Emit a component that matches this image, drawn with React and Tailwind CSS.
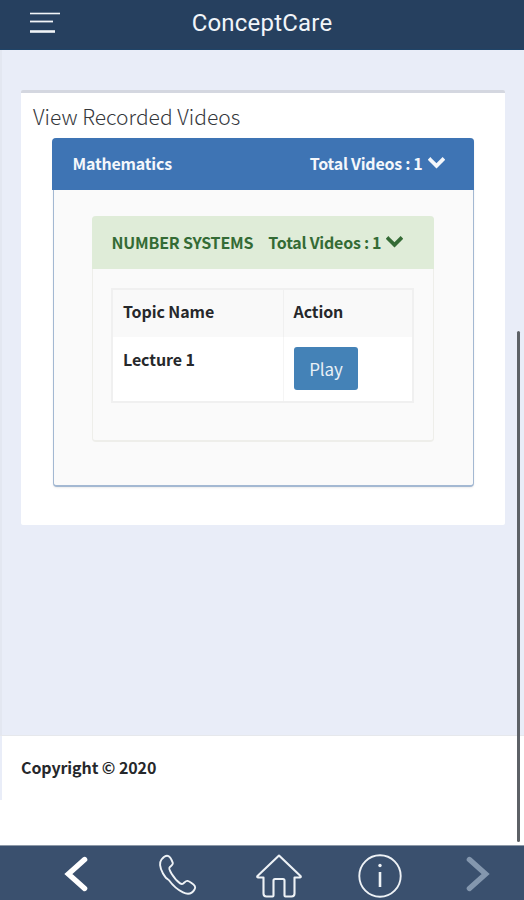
const sans = { fontFamily: '"Noto Sans CJK SC", "Noto Sans", sans-serif' };

function Chevron({ className }) {
  return (
    <svg viewBox="0 0 18 12" className={className} fill="none" stroke="currentColor" strokeWidth="3.900" strokeLinecap="square" strokeLinejoin="miter">
      <path d="M2.500 2.500 9 9l6.500-6.500" />
    </svg>
  );
}

export default function App() {
  return (
    <div className="relative flex h-[900px] w-[524px] flex-col overflow-hidden bg-white" style={sans}>
      <header className="relative flex h-[50px] shrink-0 items-center justify-center border-b border-[#1f4468] bg-[#26405f] pb-[4px]">
        <svg viewBox="0 0 32 24" className="absolute left-[29px] top-[11px] h-[24px] w-[32px]" fill="none" stroke="#f2f5f8" strokeLinecap="butt">
          <path d="M1 2.500h30" strokeWidth="1.600" />
          <path d="M1 10.500h23" strokeWidth="1.800" />
          <path d="M1 20.500h25" strokeWidth="2.600" />
        </svg>
        <span className="font-['Roboto',sans-serif] text-[24px] leading-none tracking-[0.2px] text-[#f1f5f9]">ConceptCare</span>
      </header>

      <main className="flex-1 border-l-2 border-[#e3e7f1] bg-[#e9edf8] pl-[19px] pr-[19px] pt-[40px]">
        <section className="h-[435px] rounded-[2px] border-t-[3px] border-[#d4d7e0] bg-white pl-[12px] pr-[32px]">
          <h1 className="pt-[9px] text-[21px] font-light leading-[28px] text-[#35383c]">View Recorded Videos</h1>
          <div className="ml-[19.500px] mt-[8px] h-[349px] w-[421px] rounded-[4px] border-x-[1.500px] border-b-2 border-[#a3b8d2] bg-[#fafafa] shadow-[0_1px_2px_rgba(0,0,0,0.08)]">
            <div className="-mx-[1.500px] flex h-[52px] items-center justify-between rounded-t-[4px] bg-[#3e74b4] pb-[2px] pl-[20.500px] pr-[29.500px] text-[16px] font-bold tracking-[-0.2px] text-[#f4f7fb]">
              <span>Mathematics</span>
              <span className="flex items-center gap-[5px] [word-spacing:-0.3px]">
                Total Videos : 1
                <Chevron className="h-[12px] w-[17px]" />
              </span>
            </div>
            <div className="ml-[38px] mt-[26px] h-[226px] w-[342px] rounded-[4px] border-x border-b-2 border-[#eeeeea] bg-[#fafafa]">
              <div className="-mx-px flex h-[53px] items-center rounded-t-[4px] bg-[#dfecd8] pb-[2px] pl-[20px] text-[16px] font-bold tracking-[-0.2px] text-[#346b35]">
                <span>NUMBER SYSTEMS</span>
                <span className="ml-[15px] flex items-center gap-[5px] [word-spacing:-0.2px]">
                  Total Videos : 1
                  <Chevron className="h-[12px] w-[17px]" />
                </span>
              </div>
              <table className="ml-[18.500px] mt-[19px] w-[303px] table-fixed border-collapse border-2 border-[#f0f0f0] text-[16px] font-bold tracking-[-0.1px] text-[#26282b]">
                <tbody>
                  <tr className="h-[48px] bg-[#f9f9f9]">
                    <td className="w-[171px] border-r border-[#f0f0f0] pb-[5px] pl-[10px]">Topic Name</td>
                    <td className="pb-[5px] pl-[10px]">Action</td>
                  </tr>
                  <tr className="h-[65px] bg-white">
                    <td className="border-r border-[#f5f5f5] pl-[10px] pt-[10px] align-top leading-[24px]">Lecture 1</td>
                    <td className="pl-[10.500px] align-top pt-[10px]">
                      <button className="flex h-[43px] w-[64px] items-center justify-center rounded-[3px] bg-[#4482b7] text-[17px] font-normal text-[#e8f0f6]">Play</button>
                    </td>
                  </tr>
                </tbody>
              </table>
            </div>
          </div>
        </section>
      </main>

      <footer className="h-[110px] shrink-0 border-t border-[#e6e8ec] bg-white pl-[21px] pt-[19px] text-[16px] font-bold leading-[24px] tracking-[-0.1px] text-[#26282b]">
        Copyright © 2020
      </footer>
      <div className="absolute left-0 top-[736px] h-[64px] w-[2px] bg-[#e9edf8]" />

      <nav className="relative flex h-[55px] shrink-0 items-center border-t border-[#8d99a8] bg-[#3a506e]">
        <svg viewBox="0 0 32 40" className="absolute left-[62px] top-[10px] h-[36px] w-[29px]" fill="none" stroke="#ffffff" strokeWidth="6" strokeLinecap="round" strokeLinejoin="miter">
          <path d="M25 4 7 20l18 16" />
        </svg>
        <svg viewBox="0 0 40 44" className="absolute left-[158px] top-[7px] h-[44px] w-[40px]" fill="none" stroke="#eef2f6" strokeWidth="1.900" strokeLinejoin="round">
          <path d="M3.500 6.500c2-2.400 5-4.400 7-3.400 1.400.7 3.700 5.100 4.300 6.800.5 1.500-1.800 3.200-3.200 4.500-.8.8.2 3.400 2 6.300 3 4.800 5.600 7.700 8.500 9.700 1.200.8 2.200.9 3.200.1 1.500-1.200 2.700-2.900 4.200-2.600 1.900.4 6.300 3.500 7.400 5.300 1 1.700-1 4.900-3.200 6.400-2.500 1.700-5.600 1.300-8.700-.2-4.900-2.400-10-6.600-14.200-12.400C6.500 25 2.500 16.700 2.100 12.200c-.2-2.300.1-4 1.400-5.700Z" />
        </svg>
        <svg viewBox="0 0 46 44" className="absolute left-[256px] top-[8px] h-[44px] w-[46px]" fill="none" stroke="#eef2f6" strokeWidth="2.100" strokeLinejoin="round" strokeLinecap="round">
          <path d="M23 1.500 44.500 22c.6.7.2 1.500-.7 1.500H38.500v16c0 2-1 3-3 3h-6c-.6 0-1-.4-1-1V26.500c0-1-.5-1.500-1.500-1.500h-8c-1 0-1.500.5-1.500 1.500v15c0 .6-.4 1-1 1h-6c-2 0-3-1-3-3v-16H2.200c-.9 0-1.300-.8-.7-1.500L23 1.500Z" />
        </svg>
        <svg viewBox="0 0 44 44" className="absolute left-[358px] top-[8px] h-[44px] w-[44px]" fill="none" stroke="#eef2f6">
          <circle cx="22" cy="22" r="20.700" strokeWidth="1.900" />
          <path d="M22 18v15" strokeWidth="2.600" />
          <circle cx="22" cy="11.500" r="1.700" fill="#eef2f6" stroke="none" />
        </svg>
        <svg viewBox="0 0 32 40" className="absolute left-[463px] top-[10px] h-[36px] w-[29px]" fill="none" stroke="#8497ae" strokeWidth="6" strokeLinecap="round" strokeLinejoin="miter">
          <path d="M7 4l18 16L7 36" />
        </svg>
      </nav>

      <div className="absolute left-[517px] top-[331px] h-[511px] w-[3px] rounded-full bg-[#5d6166]" />
    </div>
  );
}
